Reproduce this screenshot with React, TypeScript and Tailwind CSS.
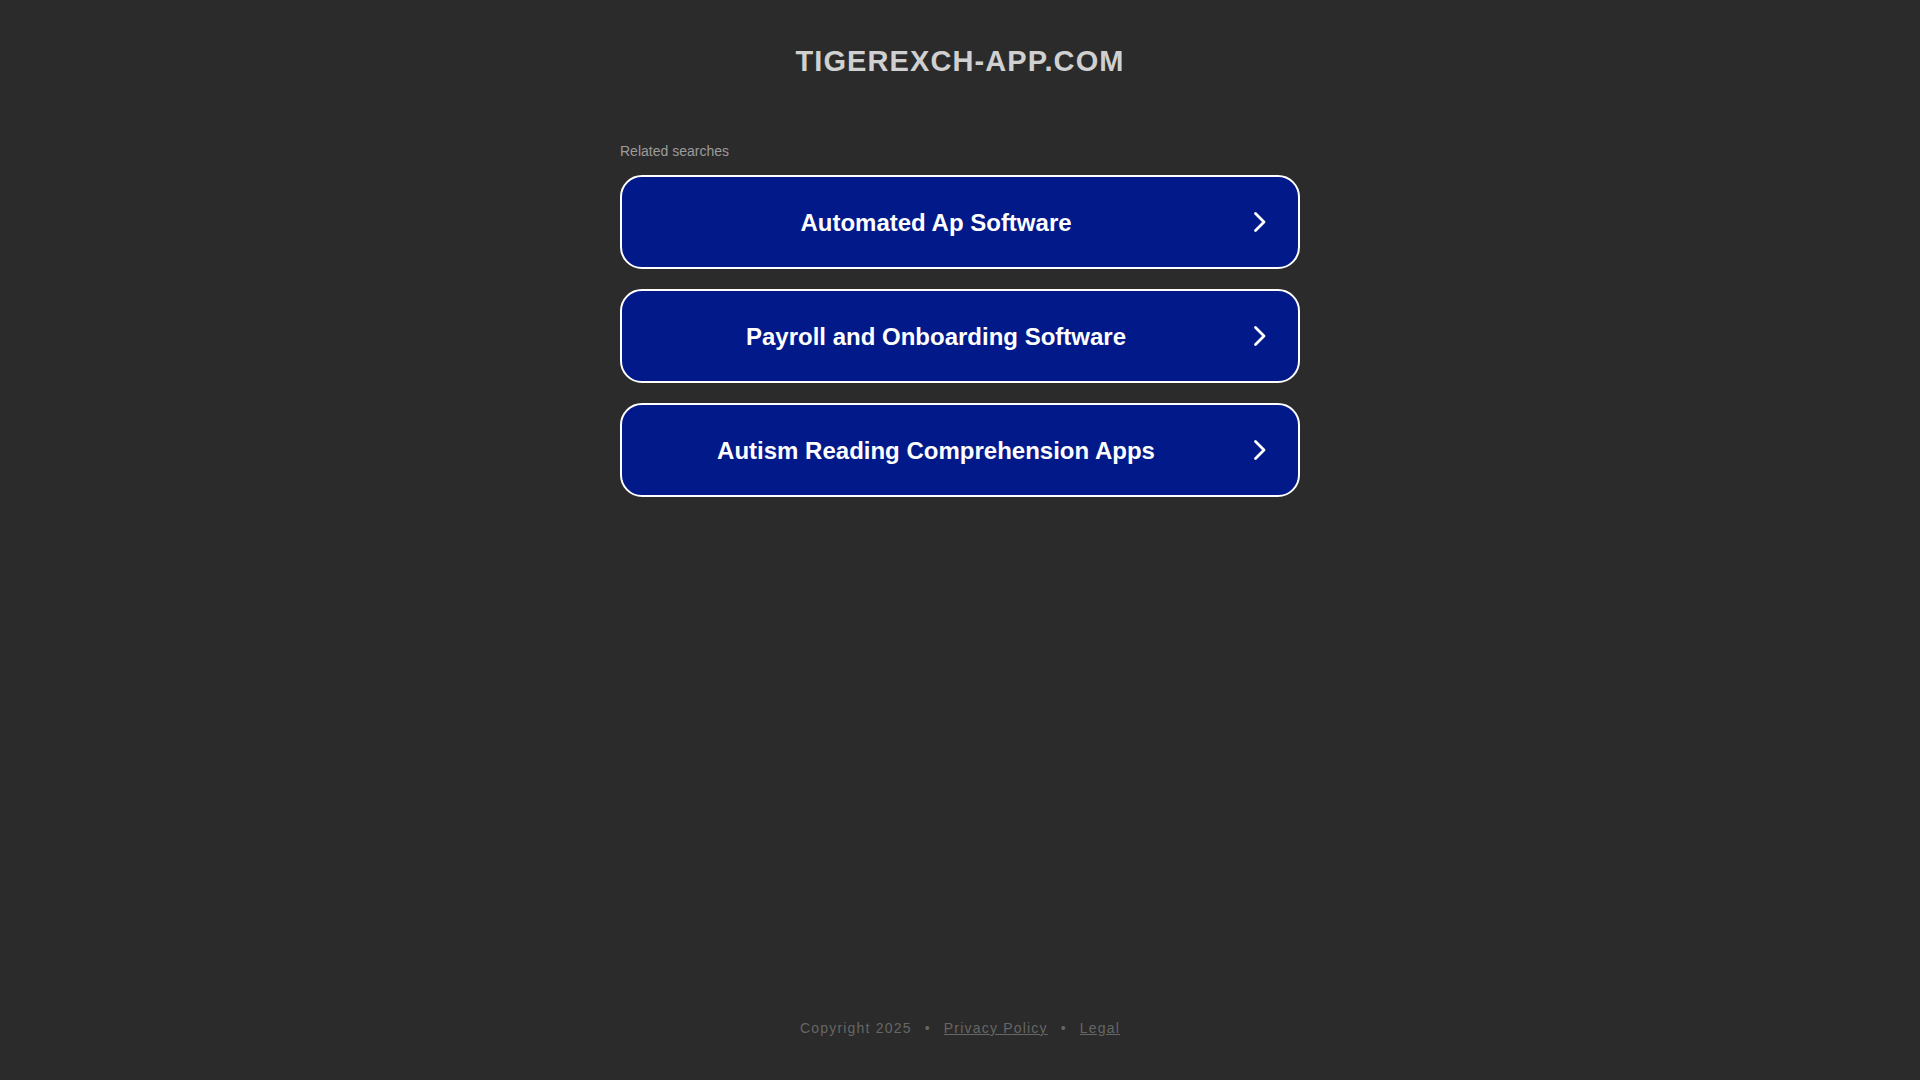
import React from "react";

const items = [
  "Automated Ap Software",
  "Payroll and Onboarding Software",
  "Autism Reading Comprehension Apps",
];

function Chevron() {
  return (
    <svg width="20" height="24" viewBox="0 0 20 24" fill="none" className="shrink-0 mr-[28px]">
      <path d="M5.5 3.5 L14 12 L5.5 20.5" stroke="#ffffff" strokeWidth="2.8" strokeLinecap="round" strokeLinejoin="round" />
    </svg>
  );
}

export default function App() {
  return (
    <div
      className="min-h-screen w-full bg-[#2b2b2b] flex flex-col"
      style={{ fontFamily: '"Liberation Sans", Arial, sans-serif' }}
    >
      <main className="flex-1 flex flex-col items-center">
        <h1 className="pt-[44px] text-[29px] leading-[35px] font-bold tracking-[1.1px] text-[#d0d0d0]">
          TIGEREXCH-APP.COM
        </h1>
        <div className="w-[680px] mt-[64px]">
          <div className="text-[14px] leading-[16px] text-[#9b9b9b]">Related searches</div>
          <div className="mt-[16px] flex flex-col gap-[20px]">
            {items.map((t) => (
              <a
                key={t}
                href="#"
                className="h-[94px] flex items-center rounded-[22px] border-2 border-white bg-[#02198a]"
              >
                <span className="flex-1 text-center text-[24px] font-bold text-white pt-[1px]">{t}</span>
                <Chevron />
              </a>
            ))}
          </div>
        </div>
      </main>
      <footer className="pb-[42px] flex justify-center text-[14px] leading-[20px] tracking-[1.2px] text-[#666666]">
        <span>Copyright 2025</span>
        <span className="mx-[13px]">•</span>
        <a href="#" className="underline">Privacy Policy</a>
        <span className="mx-[13px]">•</span>
        <a href="#" className="underline">Legal</a>
      </footer>
    </div>
  );
}
